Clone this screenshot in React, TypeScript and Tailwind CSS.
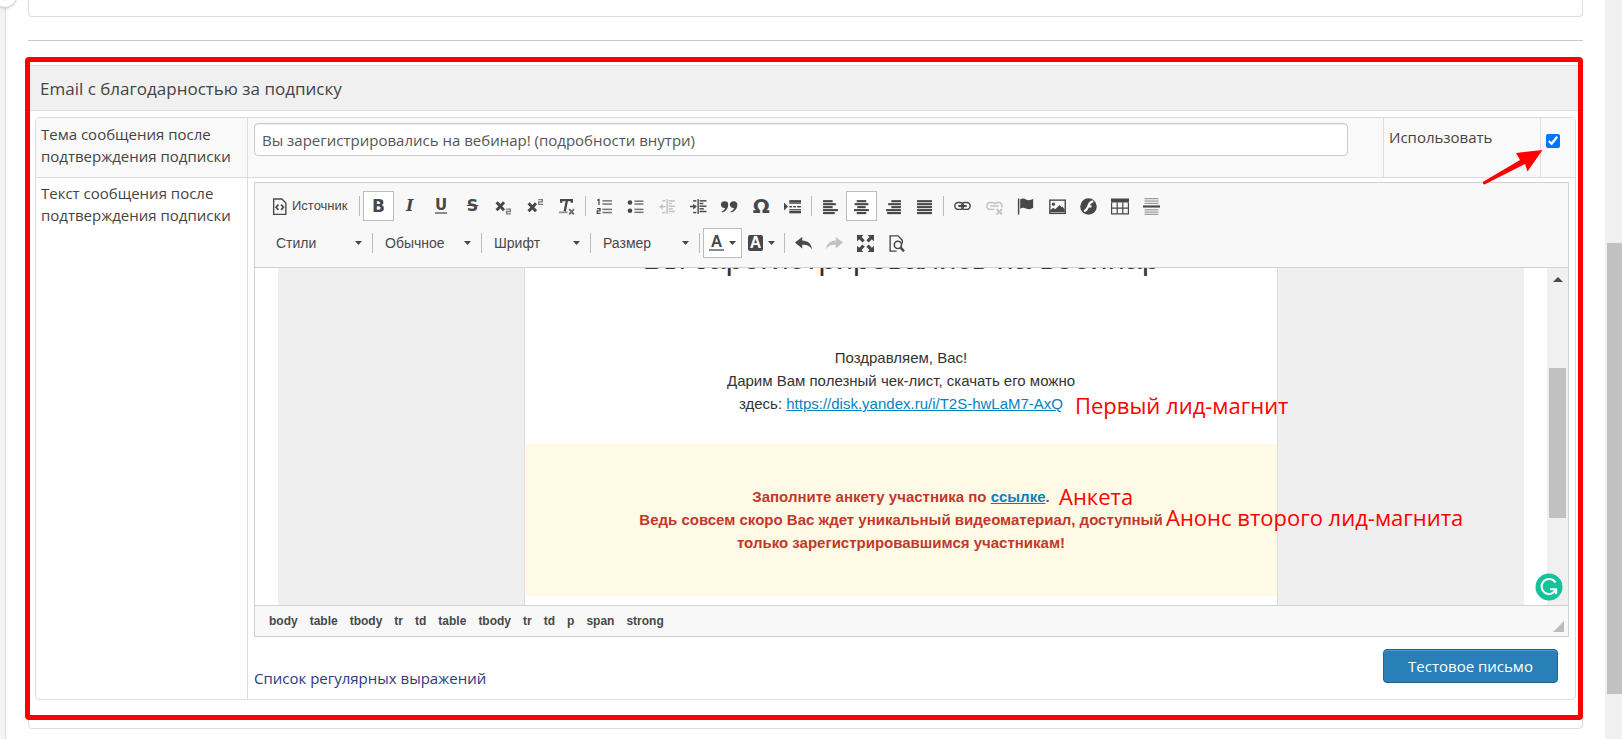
import React, { useState } from "react";
import clsx from "clsx";

const Icon: React.FC<{ children: React.ReactNode }> = ({ children }) => (
  <svg viewBox="0 0 16 16" className="h-[17px] w-[17px]" fill="currentColor" aria-hidden="true">
    {children}
  </svg>
);

interface ToolButtonProps {
  label: string;
  active?: boolean;
  disabled?: boolean;
  wide?: boolean;
  children: React.ReactNode;
}

const ToolButton: React.FC<ToolButtonProps> = ({ label, active, disabled, wide, children }) => (
  <button
    type="button"
    aria-label={label}
    title={label}
    disabled={disabled}
    className={clsx(
      "flex h-[30px] shrink-0 items-center justify-center border",
      wide ? "w-[39px] gap-[5px]" : "w-[31px]",
      active ? "border-[#bcbcbc] bg-white" : "border-transparent",
      disabled && "opacity-30"
    )}
  >
    {children}
  </button>
);

const Separator = () => <span className="mx-[3px] h-5 w-px shrink-0 bg-[#bcbcbc]" />;

const Caret = () => (
  <svg viewBox="0 0 7 4" className="h-1 w-[7px]" fill="currentColor" aria-hidden="true">
    <path d="M0 0h7L3.5 4z" />
  </svg>
);

const Combo: React.FC<{ label: string }> = ({ label }) => (
  <div className="relative flex w-[102px] shrink-0 items-center">
    <select
      aria-label={label}
      className="h-[30px] w-full appearance-none bg-transparent pl-[9px] text-sm text-[#484848] outline-none"
    >
      <option>{label}</option>
    </select>
    <span className="pointer-events-none absolute right-[7px]">
      <Caret />
    </span>
  </div>
);

const lines = (rows: number[][]) =>
  rows.map(([x, y, w, h = 1.4], i) => <rect key={i} x={x} y={y} width={w} height={h} />);

const TopToolbar = () => (
  <div className="flex items-center">
    <button type="button" className="flex h-[30px] w-[94px] shrink-0 items-center gap-1 pl-[9px] text-[13px]">
      <Icon>
        <path d="M2.5 1h7.8L14 4.7V15.5H2.5z" fill="none" stroke="currentColor" strokeWidth="1.3" />
        <path d="M7 6.2 4.8 8.7 7 11.200M9.5 6.200l2.2 2.500-2.2 2.500" fill="none" stroke="currentColor" strokeWidth="1.600" />
      </Icon>
      Источник
    </button>
    <Separator />
    <div className="flex w-[219px] shrink-0 justify-between">
      <ToolButton label="Полужирный" active>
        <span className="font-['DejaVu_Sans'] text-[17px] font-bold">B</span>
      </ToolButton>
      <ToolButton label="Курсив">
        <span className="font-['DejaVu_Serif'] text-base font-bold italic">I</span>
      </ToolButton>
      <ToolButton label="Подчеркнутый">
        <span className="border-b-2 border-[#8a8a8a] font-['DejaVu_Sans'] text-[15px] leading-[14px] font-bold">U</span>
      </ToolButton>
      <ToolButton label="Зачеркнутый">
        <span className="font-['DejaVu_Sans'] text-base font-bold line-through">S</span>
      </ToolButton>
      <ToolButton label="Подстрочный индекс">
        <Icon>
          <path d="m1.500 4 7 7.500m0-7.500-7 7.500" fill="none" stroke="currentColor" strokeWidth="2.800" />
          <path d="M10.500 10.500h4v2.200h-3.500v2.300h4" fill="none" stroke="currentColor" strokeWidth="1.200" opacity=".7" />
        </Icon>
      </ToolButton>
      <ToolButton label="Надстрочный индекс">
        <Icon>
          <path d="m1.500 5 7 7.500m0-7.500-7 7.500" fill="none" stroke="currentColor" strokeWidth="2.800" />
          <path d="M10.500 1.500h4v2.200h-3.500V6h4" fill="none" stroke="currentColor" strokeWidth="1.200" opacity=".7" />
        </Icon>
      </ToolButton>
      <ToolButton label="Убрать форматирование">
        <Icon>
          <path d="M3 4.500V2h10v2.500M8.500 2 6.300 12.500" fill="none" stroke="currentColor" strokeWidth="2.200" />
          <path d="M1 13.500h8" stroke="currentColor" strokeWidth="1.600" opacity=".6" />
          <path d="m10.500 10.500 4.500 5m0-5-4.500 5" stroke="currentColor" strokeWidth="1.700" opacity=".8" />
        </Icon>
      </ToolButton>
    </div>
    <Separator />
    <div className="flex w-[219px] shrink-0 justify-between">
      <ToolButton label="Нумерованный список">
        <Icon>
          <path d="M1.200 2.300 2.800 1.500v5M1 10h2.800v2.200H1.200v2.300H4.200" fill="none" stroke="currentColor" strokeWidth="1.200" />
          <g opacity=".75">{lines([[6, 2, 9], [6, 5, 9], [6, 10, 9], [6, 13, 9]])}</g>
        </Icon>
      </ToolButton>
      <ToolButton label="Маркированный список">
        <Icon>
          <circle cx="2.800" cy="4.200" r="2.200" />
          <circle cx="2.800" cy="12" r="2.200" />
          <g opacity=".75">{lines([[7, 2.3, 8.5], [7, 5, 8.5], [7, 10, 8.5], [7, 12.8, 8.5]])}</g>
        </Icon>
      </ToolButton>
      <ToolButton label="Уменьшить отступ" disabled>
        <Icon>
          <path d="M3.500 5.500 0 8.300l3.500 2.800V9H6V7.600H3.500z" />
          {lines([[7, 1, 1.3, 14], [9, 2, 6], [9, 4.5, 3], [9, 7, 6], [9, 9.5, 4], [9, 12, 6], [3, 2, 3], [3, 13, 3]])}
        </Icon>
      </ToolButton>
      <ToolButton label="Увеличить отступ">
        <Icon>
          <path d="M3 5.300 6.500 8 3 10.800V8.700H0V7.300h3z" />
          {lines([[7, 1, 1.3, 14], [9, 2, 6.5], [9, 4.5, 3.5], [9, 7, 6.5], [9, 9.5, 4], [9, 12, 6.5], [3, 2, 3], [3, 13, 3]])}
        </Icon>
      </ToolButton>
      <ToolButton label="Цитата">
        <Icon>
          <path d="M3.600 3a3.200 3.200 0 0 1 3.200 3.300C6.800 9.700 4.800 12.600 1 13.700l-.5-1C2.500 11.900 3.600 10.700 3.800 9.300A3.200 3.200 0 1 1 3.600 3zM12 3a3.200 3.200 0 0 1 3.400 3.300c0 3.400-2.200 6.300-6 7.400l-.5-1c2-.8 3.100-2 3.300-3.400A3.200 3.200 0 1 1 12 3z" />
        </Icon>
      </ToolButton>
      <ToolButton label="Специальный символ">
        <span className="font-['DejaVu_Sans'] text-xl font-bold">Ω</span>
      </ToolButton>
      <ToolButton label="Разрыв страницы">
        <Icon>
          <path d="M0 4.200 3.800 8 0 11.800z" />
          {lines([[5, 2, 11, 2.400], [5, 4.400, 11, 1], [5, 7.5, 2.5, 1.4], [8.700, 7.5, 2.5, 1.400], [12.400, 7.5, 3.5, 1.400], [5, 10.5, 11, 1], [5, 12, 11, 2.400]])}
        </Icon>
      </ToolButton>
    </div>
    <Separator />
    <div className="flex w-[125px] shrink-0 justify-between">
      <ToolButton label="По левому краю">
        <Icon>{lines([[1, 2, 9, 2], [1, 4.800, 12, 2], [1, 7.600, 9, 2], [1, 10.400, 14, 2], [1, 13.200, 11, 2]])}</Icon>
      </ToolButton>
      <ToolButton label="По центру" active>
        <Icon>{lines([[3.5, 2, 9, 2], [1.500, 4.800, 13, 2], [4, 7.600, 8, 2], [1, 10.400, 14, 2], [3.500, 13.200, 9, 2]])}</Icon>
      </ToolButton>
      <ToolButton label="По правому краю">
        <Icon>{lines([[6, 2, 9, 2], [3, 4.800, 12, 2], [6, 7.600, 9, 2], [1, 10.400, 14, 2], [2, 13.200, 13, 2]])}</Icon>
      </ToolButton>
      <ToolButton label="По ширине">
        <Icon>{lines([[1, 2, 14, 2], [1, 4.800, 14, 2], [1, 7.600, 14, 2], [1, 10.400, 14, 2], [1, 13.200, 14, 2]])}</Icon>
      </ToolButton>
    </div>
    <Separator />
    <div className="flex w-[220px] shrink-0 justify-between">
      <ToolButton label="Вставить ссылку">
        <Icon>
          <g fill="none" stroke="currentColor" strokeWidth="1.400">
            <rect x=".8" y="4.300" width="8.200" height="6.400" rx="3.200" />
            <rect x="7" y="4.300" width="8.200" height="6.400" rx="3.200" />
            <path d="M4 7.500h8" strokeWidth="1.800" />
          </g>
        </Icon>
      </ToolButton>
      <ToolButton label="Убрать ссылку" disabled>
        <Icon>
          <g fill="none" stroke="currentColor" strokeWidth="1.400">
            <path d="M8 10.700H4a3.200 3.200 0 0 1 0-6.400h2a3.200 3.200 0 0 1 2.500 1.200A3.200 3.200 0 0 1 11 4.300h1a3.200 3.200 0 0 1 2.800 4.500M4 7.500h8" />
            <path d="m10 10.500 5 5m0-5-5 5" strokeWidth="1.800" />
          </g>
        </Icon>
      </ToolButton>
      <ToolButton label="Якорь">
        <Icon>
          <path d="M.8.500h1.400v15H.8zM3 1.500C5-.3 6.800.5 8.500 1.500s4 .9 6.700-.7v8.400c-2.500 1.700-4.700 1.500-6.700.6S5 8.700 3 10.200z" />
        </Icon>
      </ToolButton>
      <ToolButton label="Изображение">
        <Icon>
          <rect x=".8" y="2" width="14.500" height="12.500" fill="none" stroke="currentColor" strokeWidth="1.300" />
          <circle cx="4.200" cy="5.800" r="1.500" />
          <path d="M1 13.500v-1.800l3-2.500 1.800 1.300L10 6.500l2 2.200.8-.5 2 2.600v2.700z" />
        </Icon>
      </ToolButton>
      <ToolButton label="Flash">
        <Icon>
          <circle cx="8" cy="8" r="7.800" />
          <path d="M12.500 3.200C8.800 3.400 8.600 6 7.500 8.500S5.500 12 3.800 12.300M7.500 7.900h3.300" fill="none" stroke="white" strokeWidth="2" />
        </Icon>
      </ToolButton>
      <ToolButton label="Таблица">
        <svg viewBox="0 0 18 16" className="h-[17px] w-[18px]" fill="none" stroke="currentColor" aria-hidden="true">
          <path d="M0 2h18" strokeWidth="4" />
          <path d="M.6 4v11.400h16.800V4M6.200 4v11.400M11.800 4v11.400M.6 9.600h16.800" strokeWidth="1.200" />
        </svg>
      </ToolButton>
      <ToolButton label="Горизонтальная линия">
        <Icon>
          {lines([[0, 7, 16, 2]])}
          <g opacity=".5">{lines([[1.5, 0, 13, 1.200], [1.5, 2.300, 13, 1.200], [1.5, 4.500, 13, 1.200], [1.5, 10.500, 13, 1.200], [1.5, 12.700, 13, 1.200], [1.5, 14.800, 13, 1.200]])}</g>
        </Icon>
      </ToolButton>
    </div>
  </div>
);

const BottomToolbar = () => (
  <div className="flex items-center pl-[5px]">
    {["Стили", "Обычное", "Шрифт", "Размер"].map((label) => (
      <React.Fragment key={label}>
        <Combo label={label} />
        <Separator />
      </React.Fragment>
    ))}
    <ToolButton label="Цвет текста" active wide>
      <span className="border-b-2 border-[#8a8a8a] px-0.5 text-base leading-[14px] font-bold">A</span>
      <Caret />
    </ToolButton>
    <ToolButton label="Цвет фона" wide>
      <span className="rounded-xs bg-[#484848] px-[2px] text-base leading-4 font-bold text-white">A</span>
      <Caret />
    </ToolButton>
    <Separator />
    <div className="flex">
      <ToolButton label="Отменить">
        <Icon>
          <path d="M0 7 6.800 1.800v3.300c5 .1 8.700 3 9.200 8.400-2-3-4.500-4.300-9.200-4.300v3.400z" />
        </Icon>
      </ToolButton>
      <ToolButton label="Повторить" disabled>
        <Icon>
          <path d="M16 7 9.200 1.800v3.300C4.200 5.200.5 8.100 0 13.500c2-3 4.500-4.300 9.200-4.300v3.400z" />
        </Icon>
      </ToolButton>
      <ToolButton label="Развернуть">
        <Icon>
          <path d="M0 0h6L4.300 1.900l3 3-2.200 2.200-3-3L0 6zM16 0v6l-2-1.900-3 3-2.200-2.200 3-3L10 0zM0 16v-6l2.100 1.900 3-3 2.200 2.200-3 3L6 16zM16 16h-6l1.800-1.900-3-3L11 8.900l3 3L16 10z" />
        </Icon>
      </ToolButton>
      <ToolButton label="Предварительный просмотр">
        <Icon>
          <path d="M8 15.200H2V.8h7.500L13.500 5v3" fill="none" stroke="currentColor" strokeWidth="1.300" />
          <circle cx="9.300" cy="9.300" r="3.400" fill="none" stroke="currentColor" strokeWidth="1.500" />
          <path d="m11.500 11.500 3.500 3.800" stroke="currentColor" strokeWidth="2.400" />
        </Icon>
      </ToolButton>
    </div>
  </div>
);

const Note: React.FC<{ className: string; children: React.ReactNode }> = ({ className, children }) => (
  <span
    className={clsx(
      "absolute font-['Open_Sans','Noto_Sans',sans-serif] text-[22px] leading-6 whitespace-nowrap text-[#ff0000]",
      className
    )}
  >
    {children}
  </span>
);

const MessageBody = () => (
  <div className="flex h-[338px] overflow-hidden border-b border-[#d1d1d1] bg-white text-center text-[15px] leading-[23px] text-[#333]">
    <div className="mx-[23px] flex flex-1 justify-center bg-[#efefef]">
      <div className="relative w-[754px] border-x border-[#ddd] bg-white">
        <h1 className="-mt-[27px] text-[31px] leading-9">Вы зарегистрировались на вебинар</h1>
        <p className="mt-[69px] mb-[29px]">
          Поздравляем, Вас!
          <br />
          Дарим Вам полезный чек-лист, скачать его можно
          <br />
          здесь:{" "}
          <a href="#disk" className="text-[#0782c1] underline">
            https://disk.yandex.ru/i/T2S-hwLaM7-AxQ
          </a>
        </p>
        <p className="bg-[#fffae5] pt-[41px] pb-[42px] font-bold text-[#c0392b]">
          Заполните анкету участника по{" "}
          <a href="#form" className="text-[#0782c1] underline">
            ссылке
          </a>
          .
          <br />
          Ведь совсем скоро Вас ждет уникальный видеоматериал, доступный
          <br />
          только зарегистрировавшимся участникам!
        </p>
        <Note className="top-[125px] left-[550px]">Первый лид-магнит</Note>
        <Note className="top-[216px] left-[534px]">Анкета</Note>
        <Note className="top-[237px] left-[641px]">Анонс второго лид-магнита</Note>
      </div>
    </div>
    <div className="relative w-[21px] shrink-0 bg-[#f0f0f0] px-0.5 pt-[9px] text-[#484848]">
      <svg viewBox="0 0 10 5" className="mx-auto h-[5px] w-[10px]" fill="currentColor" aria-hidden="true">
        <path d="M0 5 5 0l5 5z" />
      </svg>
      <div className="mt-[86px] h-[150px] bg-[#c1c1c1]" />
      <svg viewBox="0 0 28 28" className="absolute right-[5px] bottom-1 h-7 w-7" aria-label="Grammarly">
        <circle cx="14" cy="14" r="13.500" fill="#15c39a" />
        <path d="M20.500 9.500A7.500 7.500 0 1 0 21 16.500M15 16.200h6.200v5" fill="none" stroke="white" strokeWidth="2" />
      </svg>
    </div>
  </div>
);

const path = ["body", "table", "tbody", "tr", "td", "table", "tbody", "tr", "td", "p", "span", "strong"];

const Editor = () => (
  <div className="border border-[#d1d1d1] font-['Liberation_Sans',Arial,sans-serif] text-[#484848]">
    <div className="space-y-[7px] border-b border-[#d1d1d1] bg-[#f8f8f8] px-[7px] pt-2 pb-[9px]">
      <TopToolbar />
      <BottomToolbar />
    </div>
    <MessageBody />
    <div className="flex h-[30px] items-center justify-between bg-[#f8f8f8] pr-1 pl-[14px] text-xs font-bold">
      <div className="flex gap-3">
        {path.map((tag, i) => (
          <span key={i}>{tag}</span>
        ))}
      </div>
      <svg viewBox="0 0 11 11" className="mb-1 h-[11px] w-[11px] self-end" fill="#bcbcbc" aria-hidden="true">
        <path d="M11 0v11H0z" />
      </svg>
    </div>
  </div>
);

const App: React.FC = () => {
  const [subject, setSubject] = useState("Вы зарегистрировались на вебинар! (подробности внутри)");
  const [enabled, setEnabled] = useState(true);

  return (
    <div className="flex min-h-screen overflow-hidden bg-white font-['Open_Sans','Noto_Sans',sans-serif] text-[15px] leading-[22px] text-[#444]">
      <div className="relative w-1.5 shrink-0 border-r border-[#d9dce0] bg-[#f2f4f7]">
        <span className="absolute -top-4 -left-[7px] flex h-6 w-6 items-end justify-center rounded-full border border-[#d0d0d0] bg-white pb-1.5 text-[#888] shadow-sm">
          <svg viewBox="0 0 6 10" className="h-[10px] w-1.5" fill="none" stroke="currentColor" aria-hidden="true">
            <path d="M1 1 5 5 1 9" strokeWidth="1.5" />
          </svg>
        </span>
      </div>
      <main className="min-w-0 flex-1 pr-[22px] pl-[22px]">
        <div className="h-[17px] rounded-b border border-t-0 border-[#ddd]" />
        <hr className="mt-[23px] mb-6 border-[#c8c8c8]" />
        <section className="relative rounded-b border border-[#ddd] pb-7">
          <h2 className="mb-1.5 border-b border-[#ddd] bg-[#f0f0f0] px-[11px] pt-3 pb-[10px] text-[17px]">
            Email с благодарностью за подписку
          </h2>
          <div className="mx-1.5 rounded border border-[#ddd]">
            <div className="flex h-[60px] border-b border-[#ddd] bg-[#f9f9f9]">
              <label htmlFor="subject" className="w-[212px] shrink-0 border-r border-[#ddd] px-[5px] pt-[5px]">
                Тема сообщения после подтверждения подписки
              </label>
              <div className="flex-1 pt-[5px] pr-[35px] pl-1.5">
                <input
                  id="subject"
                  type="text"
                  value={subject}
                  onChange={(e) => setSubject(e.target.value)}
                  className="h-[33px] w-full rounded border border-[#ccc] bg-white px-[7px] text-[#555] shadow-[inset_0_1px_1px_rgba(0,0,0,0.075)] outline-none"
                />
              </div>
              <label htmlFor="enabled" className="w-[158px] shrink-0 border-x border-[#ddd] px-[5px] pt-2">
                Использовать
              </label>
              <div className="w-[34px] shrink-0 pt-4 pl-[5px]">
                <input
                  id="enabled"
                  type="checkbox"
                  checked={enabled}
                  onChange={(e) => setEnabled(e.target.checked)}
                  className="block h-[14px] w-[14px] accent-[#0075ff]"
                />
              </div>
            </div>
            <div className="flex">
              <div className="w-[212px] shrink-0 border-r border-[#ddd] px-[5px] pt-1">
                Текст сообщения после подтверждения подписки
              </div>
              <div className="min-w-0 flex-1 px-1.5 pt-1 pb-[10px]">
                <Editor />
                <div className="mt-3 flex items-start justify-between pr-[11px]">
                  <a href="#regex" className="pt-[18px] text-[#2c3a80]">
                    Список регулярных выражений
                  </a>
                  <button
                    type="button"
                    className="h-[34px] w-[175px] rounded border border-[#20638f] bg-[#2980b9] text-white shadow-[inset_0_1px_0_rgba(255,255,255,0.2)]"
                  >
                    Тестовое письмо
                  </button>
                </div>
              </div>
            </div>
          </div>
          <div className="pointer-events-none absolute -top-[9px] right-[-1px] bottom-2 -left-1 rounded-sm border-[5px] border-[#ff0000]" />
          <svg viewBox="0 0 60 36" className="pointer-events-none absolute top-[83px] right-[39px] h-9 w-[60px]" fill="#ff0000" aria-hidden="true">
            <path d="M59.500 1 44.500 22.500 42 15 2.500 35a1.500 1.500 0 0 1-2-2.500L37 11l-4-7z" />
          </svg>
        </section>
      </main>
      <div className="w-[17px] shrink-0 bg-[#f0f0f0] pt-[243px] pl-0.5">
        <div className="h-[451px] bg-[#c1c1c1]" />
      </div>
    </div>
  );
};

export default App;
